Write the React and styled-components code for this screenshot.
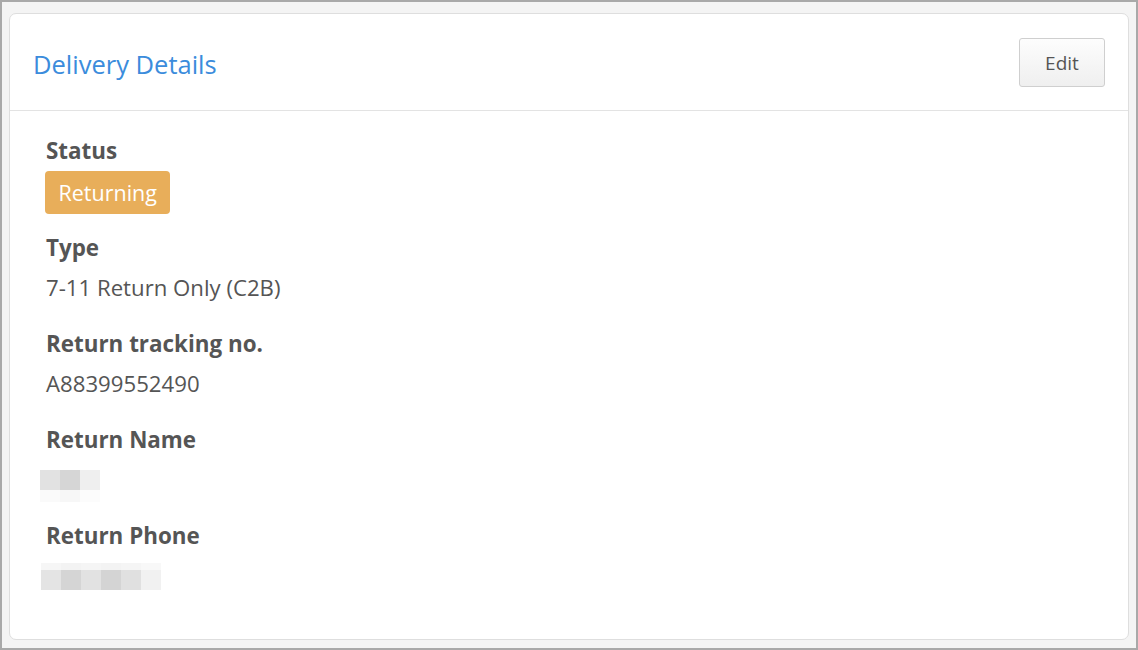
import React from "react"
import styled, { createGlobalStyle } from "styled-components"

const GlobalStyle = createGlobalStyle`
  html, body {
    margin: 0;
    padding: 0;
    height: 100%;
  }
  body {
    font-family: "Open Sans", "Noto Sans", sans-serif;
    color: #555;
    background: #f4f4f4;
  }
`

const fields = [
  { label: "Type", value: "7-11 Return Only (C2B)" },
  { label: "Return tracking no.", value: "A88399552490" },
]

// pixelated placeholder colours, row by row
const nameBlur = [
  ["#e2e2e2", "#d6d6d6", "#efefef"],
  ["#fafafa", "#f7f7f7", "#fcfcfc"],
]
const phoneBlur = [
  ["#f6f6f6", "#f3f3f3", "#f5f5f5", "#f3f3f3", "#f5f5f5", "#f8f8f8"],
  ["#e4e4e4", "#d5d5d5", "#e2e2e2", "#d4d4d4", "#e0e0e0", "#f1f1f1"],
]

const App = () => {
  return (
    <>
      <GlobalStyle />
      <Frame>
        <Card>
          <Header>
            <Title>Delivery Details</Title>
            <EditButton>Edit</EditButton>
          </Header>
          <Body>
            <Field>
              <Label>Status</Label>
              <Badge>Returning</Badge>
            </Field>
            {fields.map((f) => (
              <Field key={f.label}>
                <Label>{f.label}</Label>
                <Value>{f.value}</Value>
              </Field>
            ))}
            <Field>
              <Label>Return Name</Label>
              <Blur rows={nameBlur} heights={[20, 12]} top={11} left={-6} />
            </Field>
            <Field>
              <Label>Return Phone</Label>
              <Blur rows={phoneBlur} heights={[7, 20]} top={8} left={-5} />
            </Field>
          </Body>
        </Card>
      </Frame>
    </>
  )
}

const Blur = ({ rows, heights, top, left }) => (
  <BlurGrid $top={top} $left={left}>
    {rows.map((row, i) => (
      <BlurRow key={i} $h={heights[i]}>
        {row.map((c, j) => (
          <BlurCell key={j} $color={c} />
        ))}
      </BlurRow>
    ))}
  </BlurGrid>
)

const Frame = styled.div`
  box-sizing: border-box;
  width: 1138px;
  height: 650px;
  border: 2px solid #a9a9a9;
  padding: 11px 7px 8px 7px;
  background: #f4f4f4;
`

const Card = styled.div`
  box-sizing: border-box;
  height: 100%;
  background: #fff;
  border: 1px solid #dedede;
  border-radius: 7px;
  display: flex;
  flex-direction: column;
`

const Header = styled.div`
  display: flex;
  align-items: center;
  justify-content: space-between;
  height: 97px;
  box-sizing: border-box;
  padding: 0 23px 0 23px;
  border-bottom: 1px solid #e3e3e3;
`

const Title = styled.h2`
  margin: 0;
  font-size: 25.5px;
  font-weight: 400;
  color: #3b8cdc;
  padding-top: 4px;
`

const EditButton = styled.button`
  font-family: "Open Sans", sans-serif;
  font-size: 19px;
  color: #555;
  width: 86px;
  height: 49px;
  margin-top: 1px;
  border: 1px solid #cfcfcf;
  border-radius: 3px;
  background: linear-gradient(#fdfdfd, #efefef);
  cursor: pointer;
`

const Body = styled.div`
  padding: 25px 36px 0 36px;
  display: flex;
  flex-direction: column;
  gap: 20px;
`

const Field = styled.div`
  display: flex;
  flex-direction: column;
  align-items: flex-start;
  gap: 4px;
`

const Label = styled.div`
  font-size: 22.4px;
  font-weight: 700;
  line-height: 30px;
  color: #555;
`

const Value = styled.div`
  font-size: 22.2px;
  line-height: 42px;
  color: #555;
`

const Badge = styled.span`
  display: inline-block;
  background: #e8ae5a;
  color: #fff;
  font-size: 21.5px;
  line-height: 43px;
  padding: 0 13.5px;
  margin: 1px 0 -1px -1px;
  border-radius: 4px;
`

const BlurGrid = styled.div`
  height: 42px;
  box-sizing: border-box;
  padding-top: ${(p) => p.$top}px;
  margin-left: ${(p) => p.$left}px;
`

const BlurRow = styled.div`
  display: flex;
  height: ${(p) => p.$h}px;
`

const BlurCell = styled.div`
  width: 20px;
  background: ${(p) => p.$color};
`

export default App
